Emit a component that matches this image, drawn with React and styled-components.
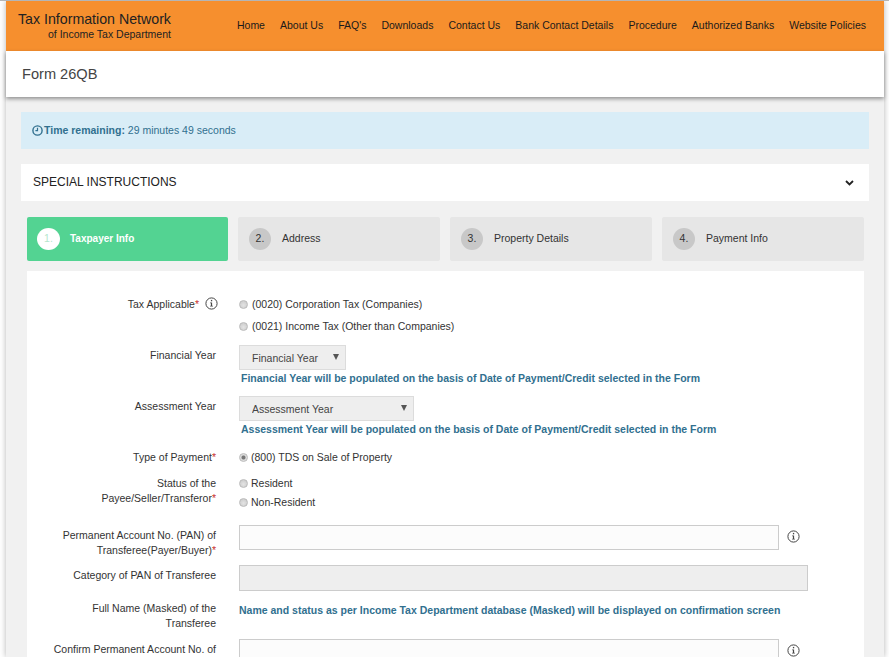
import React from 'react';
import styled, { createGlobalStyle } from 'styled-components';

const navLinks = ['Home', 'About Us', "FAQ's", 'Downloads', 'Contact Us', 'Bank Contact Details', 'Procedure', 'Authorized Banks', 'Website Policies'];

const steps = [
  { id: 1, name: 'Taxpayer Info', active: true },
  { id: 2, name: 'Address' },
  { id: 3, name: 'Property Details' },
  { id: 4, name: 'Payment Info' },
];

const InfoIcon = () => (
  <svg width="13" height="13" viewBox="0 0 13 13" fill="none">
    <circle cx="6.5" cy="6.5" r="5.6" stroke="#444" strokeWidth="1" />
    <rect x="5.9" y="2.9" width="1.3" height="1.4" fill="#444" />
    <path d="M5.1 5.5h2v3.3h.8v.8H5.1v-.8h.8V6.3h-.8z" fill="#444" />
  </svg>
);

const ClockIcon = () => (
  <svg width="11" height="11" viewBox="0 0 11 11" fill="none">
    <circle cx="5.5" cy="5.5" r="4.6" stroke="#31708f" strokeWidth="1.4" />
    <path d="M5.5 2.8v2.9H3.4" stroke="#31708f" strokeWidth="1.2" />
  </svg>
);

const ChevronIcon = () => (
  <svg width="9" height="6" viewBox="0 0 9 6" fill="none">
    <path d="M1 1l3.5 3.5L8 1" stroke="#222" strokeWidth="1.8" />
  </svg>
);

const App = () => (
  <>
    <GlobalStyle />
    <Shell>
      <Page>
        <Header>
          <Brand>
            <BrandTitle>Tax Information Network</BrandTitle>
            <BrandSub>of Income Tax Department</BrandSub>
          </Brand>
          <Nav>
            {navLinks.map((link) => <NavLink key={link}>{link}</NavLink>)}
          </Nav>
        </Header>
        <TitleBar><span>Form 26QB</span></TitleBar>

        <Content>
          <Alert>
            <ClockIcon />
            <AlertText><strong>Time remaining:</strong> 29 minutes 49 seconds</AlertText>
          </Alert>

          <Accordion>
            <AccordionTitle>SPECIAL INSTRUCTIONS</AccordionTitle>
            <ChevronIcon />
          </Accordion>

          <Steps>
            {steps.map((step) => (
              <Step key={step.id} $active={step.active}>
                <StepNumber $active={step.active}>{step.id}.</StepNumber>
                <StepName $active={step.active}>{step.name}</StepName>
              </Step>
            ))}
          </Steps>

          <Card>
            <Row>
              <Label $iconGap={17}>
                Tax Applicable<Req>*</Req>
                <LabelIcon><InfoIcon /></LabelIcon>
              </Label>
              <Field>
                <Option $height={22}><Radio name="tax" />(0020) Corporation Tax (Companies)</Option>
                <Option $height={22}><Radio name="tax" />(0021) Income Tax (Other than Companies)</Option>
              </Field>
            </Row>

            <Row $top={4}>
              <Label $pad={3}>Financial Year</Label>
              <Field>
                <SelectBox $width={107}><Select><option>Financial Year</option></Select></SelectBox>
                <Hint>Financial Year will be populated on the basis of Date of Payment/Credit selected in the Form</Hint>
              </Field>
            </Row>

            <Row $top={10}>
              <Label $pad={3}>Assessment Year</Label>
              <Field>
                <SelectBox $width={175}><Select><option>Assessment Year</option></Select></SelectBox>
                <Hint>Assessment Year will be populated on the basis of Date of Payment/Credit selected in the Form</Hint>
              </Field>
            </Row>

            <Row $top={13}>
              <Label>Type of Payment<Req>*</Req></Label>
              <Field>
                <Option $height={15}><Radio $tight name="type" defaultChecked />(800) TDS on Sale of Property</Option>
              </Field>
            </Row>

            <Row $top={11}>
              <Label>Status of the<br />Payee/Seller/Transferor<Req>*</Req></Label>
              <Field>
                <Option $height={19}><Radio $tight name="status" />Resident</Option>
                <Option $height={15}><Radio $tight name="status" />Non-Resident</Option>
              </Field>
            </Row>

            <Row $top={15}>
              <Label $pad={3}>Permanent Account No. (PAN) of<br />Transferee(Payer/Buyer)<Req>*</Req></Label>
              <InputWrap>
                <Input $width={540} />
                <IconSlot><InfoIcon /></IconSlot>
              </InputWrap>
            </Row>

            <Row $top={7}>
              <Label $pad={3}>Category of PAN of Transferee</Label>
              <Input $width={569} $height={26} $disabled disabled />
            </Row>

            <Row $top={10}>
              <Label>Full Name (Masked) of the<br />Transferee</Label>
              <Hint $flush>Name and status as per Income Tax Department database (Masked) will be displayed on confirmation screen</Hint>
            </Row>

            <Row $top={8}>
              <Label $pad={3}>Confirm Permanent Account No. of</Label>
              <InputWrap>
                <Input $width={540} />
                <IconSlot><InfoIcon /></IconSlot>
              </InputWrap>
            </Row>
          </Card>
        </Content>
      </Page>
    </Shell>
  </>
);

const GlobalStyle = createGlobalStyle`
  html, body {
    margin: 0;
    height: 100%;
    overflow: hidden;
    background: #fff;
  }
  body {
    font-family: "Liberation Sans", Arial, sans-serif;
    font-size: 12px;
    color: #333;
  }
  * {
    box-sizing: border-box;
  }
`;

const Shell = styled.div`
  height: 100vh;
  padding-left: 6px;
  border-top: 1px solid #b5b5b5;
  overflow: hidden;
`;

const Page = styled.div`
  width: 878px;
  height: 100%;
  background: #f1f1f1;
  box-shadow: 0 0 6px rgba(0, 0, 0, 0.3);
`;

const Header = styled.header`
  display: flex;
  justify-content: space-between;
  align-items: center;
  height: 50px;
  padding: 0 18px 0 12px;
  background: #f68f2e;
`;

const Brand = styled.div`
  display: flex;
  flex-direction: column;
  align-items: flex-end;
  color: #222;
  white-space: nowrap;
`;

const BrandTitle = styled.div`
  font-size: 14.2px;
  line-height: 16px;
`;

const BrandSub = styled.div`
  font-size: 10.5px;
  line-height: 14px;
`;

const Nav = styled.nav`
  display: flex;
  gap: 15px;
  padding-bottom: 2px;
`;

const NavLink = styled.a`
  font-size: 10.5px;
  color: #1a1a1a;
  white-space: nowrap;
`;

const TitleBar = styled.div`
  position: relative;
  display: flex;
  align-items: center;
  height: 46px;
  padding-left: 16px;
  background: #fff;
  font-size: 14.6px;
  color: #444;
  box-shadow: 0 2px 4px rgba(0, 0, 0, 0.4);
`;

const Content = styled.main`
  padding: 15px 15px 0;
`;

const Alert = styled.div`
  display: flex;
  align-items: center;
  gap: 1px;
  height: 37px;
  padding-left: 11px;
  background: #d9edf7;
  color: #31708f;
  font-size: 10.5px;
`;

const AlertText = styled.span`
  margin-bottom: 2px;
  strong {
    font-weight: 700;
  }
`;

const Accordion = styled.div`
  display: flex;
  justify-content: space-between;
  align-items: center;
  height: 37px;
  margin-top: 15px;
  padding: 0 15px 0 12px;
  background: #fff;
  font-size: 12px;
  color: #222;
`;

const AccordionTitle = styled.span`
  margin-bottom: 2px;
`;

const Steps = styled.div`
  display: grid;
  grid-template-columns: 201px repeat(3, 202px);
  gap: 10px;
  margin: 16px 5px 0 6px;
`;

const Step = styled.div`
  display: flex;
  align-items: center;
  height: 44px;
  padding-left: ${(props) => (props.$active ? 10 : 11)}px;
  border-radius: 2px;
  background: ${(props) => (props.$active ? '#53d392' : '#e6e6e6')};
`;

const StepNumber = styled.span`
  display: flex;
  align-items: center;
  justify-content: center;
  width: ${(props) => (props.$active ? 23 : 22)}px;
  height: 22px;
  margin-right: ${(props) => (props.$active ? 10 : 11)}px;
  padding-bottom: 2px;
  border-radius: 50%;
  font-size: 10.5px;
  background: ${(props) => (props.$active ? '#fff' : '#c8c8c8')};
  color: ${(props) => (props.$active ? '#b5e6cd' : '#333')};
`;

const StepName = styled.span`
  margin-bottom: 2px;
  font-size: ${(props) => (props.$active ? 10 : 10.5)}px;
  font-weight: ${(props) => (props.$active ? 700 : 400)};
  color: ${(props) => (props.$active ? '#fff' : '#333')};
`;

const Card = styled.section`
  margin: 10px 5px 0 6px;
  padding-top: 26px;
  height: 420px;
  background: #fff;
`;

const Row = styled.div`
  display: grid;
  grid-template-columns: 189px 1fr;
  column-gap: 23px;
  margin-top: ${(props) => props.$top || 0}px;
`;

const Label = styled.label`
  position: relative;
  padding-top: ${(props) => props.$pad || 0}px;
  padding-right: ${(props) => props.$iconGap || 0}px;
  text-align: right;
  font-size: 10.5px;
  line-height: 15px;
  color: #333;
`;

const LabelIcon = styled.span`
  position: absolute;
  top: 0;
  left: 178px;
`;

const Req = styled.span`
  color: #c9302c;
`;

const Field = styled.div`
  display: flex;
  flex-direction: column;
  align-items: flex-start;
`;

const Option = styled.label`
  display: flex;
  align-items: flex-start;
  height: ${(props) => props.$height}px;
  font-size: 10.5px;
  line-height: 15px;
  color: #333;
`;

const Radio = styled.input.attrs({ type: 'radio' })`
  appearance: none;
  width: 9px;
  height: 9px;
  margin: 3px ${(props) => (props.$tight ? 3 : 4)}px 0 0;
  border-radius: 50%;
  border: 1px solid #bbb;
  background: radial-gradient(circle at 50% 60%, #e4e4e4, #c6c6c6);
  &:checked {
    background: radial-gradient(circle, #777 0 1.5px, #ddd 2.5px);
  }
`;

const SelectBox = styled.div`
  position: relative;
  width: ${(props) => props.$width}px;
  height: 25px;
  &::after {
    content: '';
    position: absolute;
    top: 9px;
    right: 7px;
    border-left: 3px solid transparent;
    border-right: 3px solid transparent;
    border-top: 6px solid #555;
  }
`;

const Select = styled.select`
  appearance: none;
  width: 100%;
  height: 100%;
  padding-left: 12px;
  border: 1px solid #dcdcdc;
  border-radius: 0;
  background: #eee;
  font-family: inherit;
  font-size: 10.5px;
  color: #444;
`;

const Hint = styled.div`
  margin-top: ${(props) => (props.$flush ? 0 : 1)}px;
  padding: ${(props) => (props.$flush ? '2px 0 0' : '0 0 0 2px')};
  font-size: 10.5px;
  font-weight: 700;
  line-height: 15px;
  color: #31708f;
`;

const InputWrap = styled.div`
  display: flex;
  align-items: flex-start;
  gap: 8px;
`;

const IconSlot = styled.span`
  display: flex;
  margin-top: 5px;
`;

const Input = styled.input`
  width: ${(props) => props.$width}px;
  height: ${(props) => props.$height || 25}px;
  border: 1px solid #ccc;
  background: ${(props) => (props.$disabled ? '#eee' : '#fcfcfc')};
`;

export default App;
